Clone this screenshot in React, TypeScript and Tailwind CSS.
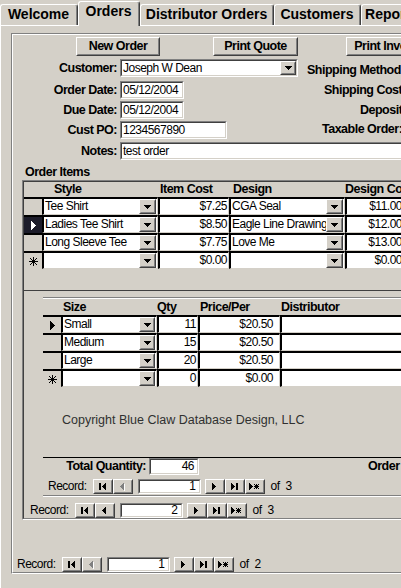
import React from "react";

const FN = "font-['Liberation_Sans',Arial,sans-serif]";
const T = "text-[12px] tracking-[-0.5px]";
const TB = "text-[12.5px] tracking-[-0.5px] font-bold";

type P = { className?: string; children?: React.ReactNode };

function Raised({ className = "", children }: P) {
  return (
    <div className={`shrink-0 border border-t-white border-l-white border-r-[#404040] border-b-[#404040] bg-[#d4d0c8] ${className}`}>
      <div className="w-full h-full border border-t-[#d4d0c8] border-l-[#d4d0c8] border-r-[#808080] border-b-[#808080] flex items-center justify-center">
        {children}
      </div>
    </div>
  );
}

function Sunken({ className = "", inner = "", children }: P & { inner?: string }) {
  return (
    <div className={`shrink-0 border border-t-[#808080] border-l-[#808080] border-r-white border-b-white ${className}`}>
      <div className={`w-full h-full border border-t-[#404040] border-l-[#404040] border-r-[#d4d0c8] border-b-[#d4d0c8] bg-white flex items-center overflow-hidden whitespace-nowrap ${T} leading-[15px] ${inner}`}>
        {children}
      </div>
    </div>
  );
}

function Down() {
  return (
    <svg width="7" height="4" viewBox="0 0 7 4" shapeRendering="crispEdges">
      <rect x="0" y="0" width="7" height="1" fill="#000" />
      <rect x="1" y="1" width="5" height="1" fill="#000" />
      <rect x="2" y="2" width="3" height="1" fill="#000" />
      <rect x="3" y="3" width="1" height="1" fill="#000" />
    </svg>
  );
}

function TriRight({ color = "#000" }: { color?: string }) {
  return (
    <svg width="5" height="9" viewBox="0 0 5 9" shapeRendering="crispEdges">
      <rect x="0" y="0" width="1" height="9" fill={color} />
      <rect x="1" y="1" width="1" height="7" fill={color} />
      <rect x="2" y="2" width="1" height="5" fill={color} />
      <rect x="3" y="3" width="1" height="3" fill={color} />
      <rect x="4" y="4" width="1" height="1" fill={color} />
    </svg>
  );
}

function Star() {
  return (
    <svg width="9" height="9" viewBox="0 0 9 9" shapeRendering="crispEdges" fill="#000">
      <rect x="4" y="0" width="1" height="9" />
      <rect x="0" y="4" width="9" height="1" />
      <rect x="1" y="1" width="1" height="1" />
      <rect x="2" y="2" width="1" height="1" />
      <rect x="3" y="3" width="1" height="1" />
      <rect x="5" y="5" width="1" height="1" />
      <rect x="6" y="6" width="1" height="1" />
      <rect x="7" y="7" width="1" height="1" />
      <rect x="7" y="1" width="1" height="1" />
      <rect x="6" y="2" width="1" height="1" />
      <rect x="5" y="3" width="1" height="1" />
      <rect x="3" y="5" width="1" height="1" />
      <rect x="2" y="6" width="1" height="1" />
      <rect x="1" y="7" width="1" height="1" />
    </svg>
  );
}

type R = [number, number, number, number];
const triL = (o: number): R[] => [[o, 3, 1, 1], [o + 1, 2, 1, 3], [o + 2, 1, 1, 5], [o + 3, 0, 1, 7]];
const triR = (o: number): R[] => [[o, 0, 1, 7], [o + 1, 1, 1, 5], [o + 2, 2, 1, 3], [o + 3, 3, 1, 1]];
const bar = (o: number): R[] => [[o, 0, 2, 7]];
const star = (o: number): R[] => [
  [o + 2, 1, 1, 5], [o, 3, 5, 1], [o, 1, 1, 1], [o + 1, 2, 1, 1], [o + 3, 4, 1, 1], [o + 4, 5, 1, 1],
  [o + 4, 1, 1, 1], [o + 3, 2, 1, 1], [o + 1, 4, 1, 1], [o, 5, 1, 1],
];

function Glyph({ kind, disabled }: { kind: "first" | "prev" | "next" | "last" | "new"; disabled?: boolean }) {
  let rects: R[] = [];
  let w = 4;
  if (kind === "first") { rects = [...bar(0), ...triL(3)]; w = 7; }
  if (kind === "prev") { rects = triL(0); w = 4; }
  if (kind === "next") { rects = triR(0); w = 4; }
  if (kind === "last") { rects = [...triR(0), ...bar(5)]; w = 7; }
  if (kind === "new") { rects = [...triR(0), ...star(5)]; w = 10; }
  return (
    <svg width={w + 1} height="8" viewBox={`0 0 ${w + 1} 8`} shapeRendering="crispEdges">
      {disabled && rects.map((r, i) => <rect key={"w" + i} x={r[0] + 1} y={r[1] + 1} width={r[2]} height={r[3]} fill="#fff" />)}
      {rects.map((r, i) => <rect key={i} x={r[0]} y={r[1]} width={r[2]} height={r[3]} fill={disabled ? "#808080" : "#000"} />)}
    </svg>
  );
}

function Nav({ ml, value, total, prevOff }: { ml: string; value: string; total: string; prevOff?: boolean }) {
  return (
    <div className={`flex items-center h-[15px] shrink-0 ${ml}`}>
      <div className={`shrink-0 ${T} leading-[15px] whitespace-nowrap`}>Record:</div>
      <Raised className="ml-[6px] w-[20px] h-[15px]"><Glyph kind="first" /></Raised>
      <Raised className="w-[20px] h-[15px]"><Glyph kind="prev" disabled={prevOff} /></Raised>
      <Sunken className="ml-[5px] w-[63px] h-[15px]" inner="justify-end pr-[3px]">{value}</Sunken>
      <Raised className="ml-[4px] w-[20px] h-[15px]"><Glyph kind="next" /></Raised>
      <Raised className="w-[20px] h-[15px]"><Glyph kind="last" /></Raised>
      <Raised className="w-[20px] h-[15px]"><Glyph kind="new" /></Raised>
      <div className={`shrink-0 ml-[6px] ${T} leading-[15px] whitespace-nowrap`}>of<span className="ml-[6px]">{total}</span></div>
    </div>
  );
}

function Tab({ label, w, selected }: { label: string; w: string; selected?: boolean }) {
  return (
    <div
      className={`shrink-0 ${w} ${selected ? "h-[25px] -mb-px relative z-10 bg-[#d4d0c8]" : "h-[21px]"} border-t border-l border-r border-t-white border-l-white border-r-[#404040] rounded-t-[3px] flex`}
    >
      <div className="flex-1 border-r border-r-[#808080] rounded-tr-[2px] flex justify-center pt-[1px] font-bold text-[14px] leading-[16px] whitespace-nowrap overflow-hidden">
        {label}
      </div>
    </div>
  );
}

const CELL = `shrink-0 h-[18px] border-t-2 border-l-2 border-r border-b border-t-black border-l-black border-r-[#d4d0c8] border-b-[#d4d0c8] bg-white flex items-center overflow-hidden whitespace-nowrap ${T} leading-[15px]`;

function Sel({ kind, dark }: { kind?: "cur" | "new"; dark?: boolean }) {
  return (
    <div className={`shrink-0 w-[18px] h-[18px] border-t-2 border-t-black ${dark ? "bg-[#1c1c2a]" : "bg-[#d4d0c8]"} flex items-center justify-center`}>
      {kind === "cur" && <TriRight color={dark ? "#fff" : "#000"} />}
      {kind === "new" && <Star />}
    </div>
  );
}

function Combo({ w, btn, text }: { w: string; btn: string; text: string }) {
  return (
    <div className={`${CELL} ${w}`}>
      <div className="flex-1 pl-[1px] overflow-hidden">{text}</div>
      <Raised className={`${btn} h-[15px] mr-px`}><Down /></Raised>
    </div>
  );
}

const items = [
  { s: "Tee Shirt", c: "$7.25", d: "CGA Seal", dc: "$11.00", sel: undefined as undefined | "cur" | "new", dark: false },
  { s: "Ladies Tee Shirt", c: "$8.50", d: "Eagle Line Drawing", dc: "$12.00", sel: "cur" as const, dark: true },
  { s: "Long Sleeve Tee", c: "$7.75", d: "Love Me", dc: "$13.00", sel: undefined, dark: false },
  { s: "", c: "$0.00", d: "", dc: "$0.00", sel: "new" as const, dark: false },
];

const sizes = [
  { s: "Small", q: "11", p: "$20.50", sel: "cur" as undefined | "cur" | "new" },
  { s: "Medium", q: "15", p: "$20.50", sel: undefined },
  { s: "Large", q: "20", p: "$20.50", sel: undefined },
  { s: "", q: "0", p: "$0.00", sel: "new" as const },
];

const LBL = `shrink-0 ${TB} leading-[18px] whitespace-nowrap`;
const HB = `shrink-0 ${TB} leading-[15px] whitespace-nowrap`;

export default function App() {
  return (
    <div className={`w-[401px] h-[588px] overflow-hidden bg-[#d4d0c8] text-black ${FN}`}>
      {/* Tabs */}
      <div className="flex items-end h-[25px]">
        <Tab w="w-[78px]" label="Welcome" />
        <Tab selected w="w-[62px]" label="Orders" />
        <Tab w="w-[134px]" label="Distributor Orders" />
        <Tab w="w-[87px]" label="Customers" />
        <Tab w="w-[62px]" label="Reports" />
      </div>

      {/* Tab page */}
      <div className="border-t border-t-white border-l border-l-white pl-[10px] pt-[7px] h-[563px]">
        {/* Outer subform */}
        <div className="w-[420px] h-[541px] border-t border-l border-b border-t-[#808080] border-l-[#808080] border-b-white">
          <div className="h-full border-t border-l border-b border-t-white border-l-white border-b-[#808080] flex flex-col">
            {/* Buttons */}
            <div className="flex mt-[2px] h-[19px] shrink-0">
              <Raised className="ml-[63px] w-[84px] h-[19px]"><span className={HB}>New Order</span></Raised>
              <Raised className="ml-[53px] w-[85px] h-[19px]"><span className={HB}>Print Quote</span></Raised>
              <Raised className="ml-[48px] w-[85px] h-[19px]"><span className={HB}>Print Invoice</span></Raised>
            </div>

            {/* Customer */}
            <div className="flex items-start mt-[3px] h-[18px] shrink-0">
              <div className={`w-[104px] text-right ${LBL}`}>Customer:</div>
              <Sunken className="ml-[3px] w-[178px] h-[18px]">
                <div className="flex-1 pl-[1px] overflow-hidden">Joseph W Dean</div>
                <Raised className="w-[16px] h-full"><Down /></Raised>
              </Sunken>
              <div className={`ml-[9px] ${LBL} leading-[14px] mt-[2px]`}>Shipping Method:</div>
            </div>

            {/* Order Date */}
            <div className="flex items-start mt-[4px] h-[18px] shrink-0">
              <div className={`w-[104px] text-right ${LBL}`}>Order Date:</div>
              <Sunken className="ml-[3px] w-[64px] h-[18px]" inner="pl-[1px]">05/12/2004</Sunken>
              <div className={`ml-[140px] ${LBL} leading-[14px]`}>Shipping Cost:</div>
            </div>

            {/* Due Date */}
            <div className="flex items-start mt-[2px] h-[18px] shrink-0">
              <div className={`w-[104px] text-right ${LBL}`}>Due Date:</div>
              <Sunken className="ml-[3px] w-[64px] h-[18px]" inner="pl-[1px]">05/12/2004</Sunken>
              <div className={`ml-[176px] ${LBL} leading-[14px]`}>Deposit:</div>
            </div>

            {/* Cust PO */}
            <div className="flex items-start mt-[2px] h-[18px] shrink-0">
              <div className={`w-[104px] text-right ${LBL}`}>Cust PO:</div>
              <Sunken className="ml-[3px] w-[107px] h-[18px]" inner="pl-[1px]">1234567890</Sunken>
              <div className={`ml-[95px] ${LBL} leading-[14px] -mt-px`}>Taxable Order:</div>
            </div>

            {/* Notes */}
            <div className="flex items-start mt-[3px] h-[18px] shrink-0">
              <div className={`w-[104px] text-right ${LBL}`}>Notes:</div>
              <Sunken className="ml-[3px] w-[300px] h-[18px]" inner="pl-[1px]">test order</Sunken>
            </div>

            <div className={`mt-[5px] ml-[12px] h-[15px] ${HB}`}>Order Items</div>

            {/* Order Items subform */}
            <div className="ml-[9px] w-[400px] h-[340px] shrink-0 border-t border-l border-b border-t-[#808080] border-l-[#808080] border-b-white">
              <div className="h-full border-t border-l border-b border-t-[#404040] border-l-[#404040] border-b-[#808080] flex flex-col">
                {/* header */}
                <div className={`flex h-[15px] ${HB}`}>
                  <div className="w-[18px] shrink-0" />
                  <div className="w-[116px] shrink-0 pl-[12px]">Style</div>
                  <div className="w-[71px] shrink-0 pl-[2px]">Item Cost</div>
                  <div className="w-[116px] shrink-0 pl-[4px]">Design</div>
                  <div className="w-[70px] shrink-0">Design Cost</div>
                </div>
                {items.map((r, i) => (
                  <div key={i} className="flex shrink-0">
                    <Sel kind={r.sel} dark={r.dark} />
                    <Combo w="w-[116px]" btn="w-[17px]" text={r.s} />
                    <div className={`${CELL} w-[71px] justify-end pr-px`}>{r.c}</div>
                    <Combo w="w-[116px]" btn="w-[17px]" text={r.d} />
                    <div className={`${CELL} w-[60px] justify-end pr-[2px]`}>{r.dc}</div>
                  </div>
                ))}
                <div className="h-[21px] shrink-0" />
                <div className="h-px bg-[#404040] shrink-0" />
                <div className="h-[6px] shrink-0" />

                {/* Size subform */}
                <div className="ml-[19px] w-[400px] h-[200px] shrink-0 flex flex-col">
                  <div className="h-[2px] border-t border-t-[#808080] border-b border-b-white shrink-0" />
                  <div className={`flex h-[16px] pt-px ${HB}`}>
                    <div className="w-[18px] shrink-0" />
                    <div className="w-[96px] shrink-0 pl-[2px]">Size</div>
                    <div className="w-[41px] shrink-0">Qty</div>
                    <div className="w-[82px] shrink-0 pl-[2px]">Price/Per</div>
                    <div className="w-[100px] shrink-0 pl-[1px]">Distributor</div>
                  </div>
                  {sizes.map((r, i) => (
                    <div key={i} className="flex shrink-0">
                      <Sel kind={r.sel} />
                      <Combo w="w-[96px]" btn="w-[16px]" text={r.s} />
                      <div className={`${CELL} w-[41px] justify-end pr-px`}>{r.q}</div>
                      <div className={`${CELL} w-[82px] justify-end pr-[6px]`}>{r.p}</div>
                      <div className={`${CELL} w-[123px]`} />
                    </div>
                  ))}
                  <div className="h-[70px] shrink-0 pt-[26px] pl-[19px]">
                    <div className="text-[12.5px] leading-[15px] text-[#303030] whitespace-nowrap">
                      Copyright Blue Claw Database Design, LLC
                    </div>
                  </div>
                  <div className="h-px bg-black shrink-0" />
                  <div className="flex items-center h-[17px] shrink-0">
                    <div className={`w-[103px] text-right ${HB}`}>Total Quantity:</div>
                    <Sunken className="ml-[3px] w-[50px] h-[17px]" inner="justify-end pr-[3px]">46</Sunken>
                    <div className={`ml-[169px] ${HB}`}>Order Total:</div>
                  </div>
                  <div className="h-[4px] shrink-0" />
                  <Nav ml="ml-[5px]" value="1" total="3" prevOff />
                  <div className="h-px shrink-0" />
                  <div className="h-[2px] border-t border-t-[#808080] border-b border-b-white shrink-0" />
                </div>

                <div className="h-[6px] shrink-0" />
                <Nav ml="ml-[6px]" value="2" total="3" />
              </div>
            </div>

            <div className="h-[37px] shrink-0" />
            <Nav ml="ml-[4px]" value="1" total="2" prevOff />
          </div>
        </div>
      </div>
    </div>
  );
}
